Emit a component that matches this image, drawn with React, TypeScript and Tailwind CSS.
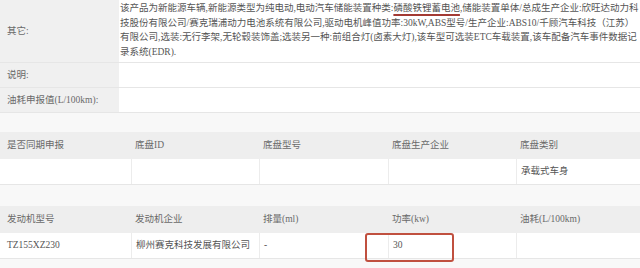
import React from 'react';

const FONT = "font-['Liberation_Serif','Noto_Sans_CJK_SC',serif]";

const chassisHead = ['是否同期申报', '底盘ID', '底盘型号', '底盘生产企业', '底盘类别'];
const chassisRow = ['', '', '', '', '承载式车身'];
const engineHead = ['发动机型号', '发动机企业', '排量(ml)', '功率(kw)', '油耗(L/100km)'];
const engineRow = ['TZ155XZ230', '柳州赛克科技发展有限公司', '-', '30', ''];

const COLS = 'grid grid-cols-[131px_128px_129px_128px_1fr]';

function InfoTable({ head, row, children }: { head: string[]; row: string[]; children?: React.ReactNode }) {
    return (
        <div className="relative">
            <div className={`${COLS} h-[27px] items-center bg-[#eeeeee] text-[#6a6a6a]`}>
                {head.map((h, i) => (
                    <div key={h} className={i === 0 ? 'pl-[7px]' : 'pl-[4px]'}>
                        {h}
                    </div>
                ))}
            </div>
            <div className={`${COLS} h-[26px] bg-white text-[#555] border-b border-[#e6e6e6]`}>
                {row.map((c, i) => (
                    <div key={i} className={`flex items-center ${i === 0 ? 'pl-[7px]' : 'pl-[4px] border-l border-[#ececec]'}`}>
                        {c}
                    </div>
                ))}
            </div>
            {children}
        </div>
    );
}

export default function App() {
    return (
        <div className={`w-[640px] h-[268px] overflow-hidden bg-[#f8f8f8] text-[9.5px] ${FONT}`}>
            {/* Basic info rows */}
            <div className="flex h-[63px] border-b border-[#e6e6e6]">
                <div className="flex w-[119px] items-center bg-[#f0f0f0] pl-[7px] text-[#6a6a6a]">其它:</div>
                <div className="flex-1 bg-white pl-[1px] pt-[1px] leading-[14.6px] text-[#555] whitespace-nowrap">
                    该产品为新能源车辆,新能源类型为纯电动,电动汽车储能装置种类:
                    <span className="underline decoration-2 decoration-[#a33a33] underline-offset-[3px]">磷酸铁锂蓄电池</span>
                    ,储能装置单体/总成生产企业:欣旺达动力科
                    <br />
                    技股份有限公司/赛克瑞浦动力电池系统有限公司,驱动电机峰值功率:30kW,ABS型号/生产企业:ABS10/千顾汽车科技（江苏）
                    <br />
                    有限公司,选装:无行李架,无轮毂装饰盖;选装另一种:前组合灯(卤素大灯),该车型可选装ETC车载装置,该车配备汽车事件数据记
                    <br />
                    录系统(EDR).
                </div>
            </div>
            <div className="flex h-[25px] border-b border-[#e6e6e6]">
                <div className="flex w-[119px] items-center bg-[#f0f0f0] pl-[7px] text-[#6a6a6a]">说明:</div>
                <div className="flex-1 bg-white" />
            </div>
            <div className="flex h-[25px] border-b border-[#e6e6e6]">
                <div className="flex w-[119px] items-center bg-[#f0f0f0] pl-[7px] text-[#6a6a6a]">油耗申报值(L/100km):</div>
                <div className="flex-1 bg-white" />
            </div>

            <div className="mt-[19px]">
                <InfoTable head={chassisHead} row={chassisRow} />
            </div>

            <div className="mt-[21px]">
                <InfoTable head={engineHead} row={engineRow}>
                    {/* annotation box around power value */}
                    <div className="absolute left-[365px] top-[27px] h-[29px] w-[89px] rounded-[3px] border-2 border-[#c0503f]" />
                </InfoTable>
            </div>
        </div>
    );
}
